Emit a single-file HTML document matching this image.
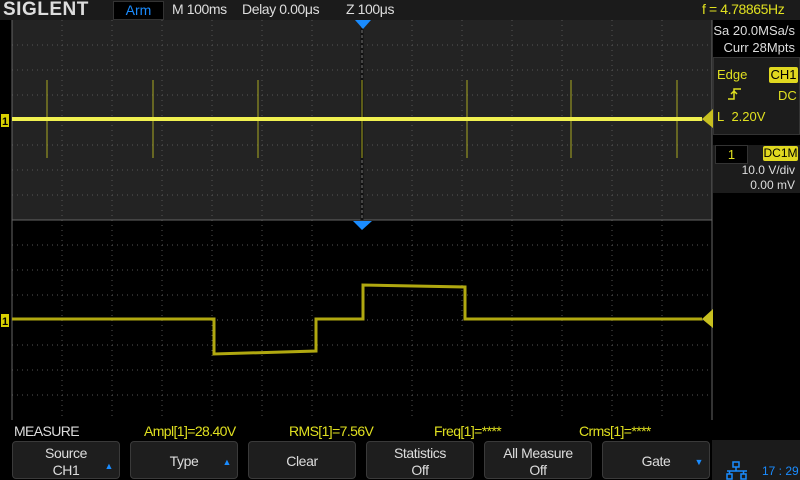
<!DOCTYPE html>
<html><head><style>
body{margin:0;width:800px;height:480px;background:#000;overflow:hidden;position:relative;font-family:"Liberation Sans",sans-serif}
.a{position:absolute}
.btn{position:absolute;top:441px;width:108px;height:38px;background:#1e1e1e;border:1px solid #3a3a3a;border-radius:4px;color:#ddd;font-size:14px;text-align:center;box-sizing:border-box;letter-spacing:-0.4px}
.arr{position:absolute;right:6px;top:16px;color:#1a8cff;font-size:9px}
</style></head><body>
<div class="a" style="left:0;top:0;width:800px;height:20px;background:#1b1b1b"></div>
<div class="a" style="left:3px;top:0;font-size:19px;font-weight:bold;color:#ddd;letter-spacing:0.5px;line-height:20px">SIGLENT</div>
<div class="a" style="left:113px;top:1px;width:49px;height:17px;background:#000;border:1px solid #333;color:#1a8cff;font-size:14px;text-align:center;line-height:17px">Arm</div>
<div class="a" style="left:172px;top:1px;color:#ddd;font-size:14px;letter-spacing:-0.4px">M 100ms</div>
<div class="a" style="left:242px;top:1px;color:#ddd;font-size:14px;letter-spacing:-0.4px">Delay 0.00μs</div>
<div class="a" style="left:346px;top:1px;color:#ddd;font-size:14px;letter-spacing:-0.4px">Z 100μs</div>
<div class="a" style="left:702px;top:1px;color:#e0e020;font-size:14px;letter-spacing:-0.4px">f = 4.78865Hz</div>
<svg class="a" style="left:0;top:20px" width="713" height="400">
<rect x="12" y="0" width="700" height="200" fill="#232323"/>
<g stroke="#555" stroke-dasharray="1,4" stroke-width="1">
<path d="M62 0V400M112 0V400M162 0V400M212 0V400M262 0V400M312 0V400M412 0V400M462 0V400M512 0V400M562 0V400M612 0V400M662 0V400"/>
<path d="M12 25H712M12 50H712M12 75H712M12 125H712M12 150H712M12 175H712M12 225H712M12 250H712M12 275H712M12 325H712M12 350H712M12 375H712"/>
<path d="M12 100H712M12 300H712" stroke="#666"/>
</g>
<line x1="12" y1="0" x2="12" y2="400" stroke="#666"/>
<line x1="712" y1="0" x2="712" y2="400" stroke="#666"/>
<line x1="12" y1="200" x2="712" y2="200" stroke="#666"/>
<line x1="362" y1="0" x2="362" y2="200" stroke="#111" stroke-width="3"/>
<line x1="362" y1="0" x2="362" y2="200" stroke="#777" stroke-dasharray="3,2"/>
<g stroke="#a8a820" stroke-width="1">
<path d="M47 60V138M153 60V138M258 60V138M362 60V138M467 60V138M571 60V138M677 60V138"/>
</g>
<rect x="12" y="97" width="690" height="4" fill="#f0f050"/>
<g fill="none" stroke="#b0a810" stroke-width="3">
<path d="M12 299H214V334L316 331V299H363V265L465 267V299H702"/>
</g>
<polygon points="355,0 371,0 363,9" fill="#1a8cff"/>
<polygon points="353,201 372,201 362,210" fill="#1a8cff"/>
<polygon points="713,89 702,99 713,108" fill="#c8c020"/>
<polygon points="713,289 702,299 713,308" fill="#c8c020"/>
<rect x="1" y="94" width="8" height="13" fill="#d8d000"/>
<rect x="1" y="294" width="8" height="13" fill="#d8d000"/>
<text x="2" y="105" font-size="11" font-weight="bold" fill="#000" font-family="Liberation Sans">1</text>
<text x="2" y="305" font-size="11" font-weight="bold" fill="#000" font-family="Liberation Sans">1</text>
</svg>
<div class="a" style="left:713px;top:20px;width:87px;height:37px;color:#ddd;font-size:13px;text-align:right;line-height:17px;padding-right:5px;box-sizing:border-box;padding-top:2px">Sa 20.0MSa/s<br>Curr 28Mpts</div>
<div class="a" style="left:713px;top:57px;width:87px;height:78px;background:#1c1c1c;border:1px solid #333;box-sizing:border-box"></div>
<div class="a" style="left:717px;top:67px;color:#e0e020;font-size:13px">Edge</div>
<div class="a" style="left:769px;top:67px;width:29px;height:16px;background:#e0d820;color:#000;font-size:13px;text-align:center;line-height:16px;border-radius:2px">CH1</div>
<svg class="a" style="left:728px;top:87px" width="14" height="14"><path d="M0 12H6V2H13M3 7L6 4L9 7" fill="none" stroke="#e0e020" stroke-width="1.5"/></svg>
<div class="a" style="left:778px;top:88px;color:#e0e020;font-size:13px">DC</div>
<div class="a" style="left:717px;top:109px;color:#e0e020;font-size:13px">L&nbsp; 2.20V</div>
<div class="a" style="left:713px;top:145px;width:87px;height:48px;background:#1c1c1c"></div>
<div class="a" style="left:715px;top:145px;width:31px;height:17px;background:#000;border:1px solid #333;color:#e0e020;font-size:13px;text-align:center;line-height:17px">1</div>
<div class="a" style="left:763px;top:146px;width:35px;height:15px;background:#e0d820;color:#000;font-size:12px;text-align:center;line-height:15px;border-radius:2px">DC1M</div>
<div class="a" style="left:713px;top:163px;width:82px;color:#ddd;font-size:12px;text-align:right;line-height:15px">10.0 V/div<br>0.00 mV</div>
<div class="a" style="left:14px;top:423px;color:#ddd;font-size:14px;letter-spacing:-0.6px">MEASURE</div>
<div class="a" style="left:144px;top:423px;color:#e0e020;font-size:14px;letter-spacing:-0.6px">Ampl[1]=28.40V</div>
<div class="a" style="left:289px;top:423px;color:#e0e020;font-size:14px;letter-spacing:-0.6px">RMS[1]=7.56V</div>
<div class="a" style="left:434px;top:423px;color:#e0e020;font-size:14px;letter-spacing:-0.6px">Freq[1]=****</div>
<div class="a" style="left:579px;top:423px;color:#e0e020;font-size:14px;letter-spacing:-0.6px">Crms[1]=****</div>
<div class="btn" style="left:12px;line-height:17px;padding-top:3px">Source<br>CH1<span class="arr">▲</span></div>
<div class="btn" style="left:130px;line-height:38px">Type<span class="arr" style="line-height:9px">▲</span></div>
<div class="btn" style="left:248px;line-height:38px">Clear</div>
<div class="btn" style="left:366px;line-height:17px;padding-top:3px">Statistics<br>Off</div>
<div class="btn" style="left:484px;line-height:17px;padding-top:3px">All Measure<br>Off</div>
<div class="btn" style="left:602px;line-height:38px">Gate<span class="arr" style="line-height:9px">▼</span></div>
<div class="a" style="left:712px;top:440px;width:88px;height:40px;background:#1b1b1b"></div>
<svg class="a" style="left:726px;top:461px" width="22" height="19"><g fill="none" stroke="#1a8cff" stroke-width="1.5"><rect x="7" y="1" width="6" height="5"/><rect x="1" y="13" width="5" height="5"/><rect x="15" y="13" width="5" height="5"/><path d="M10 6V10M1 10H21M3.5 10V13M17.5 10V13"/></g></svg>
<div class="a" style="left:762px;top:464px;color:#1a8cff;font-size:12px">17 : 29</div>
</body></html>
